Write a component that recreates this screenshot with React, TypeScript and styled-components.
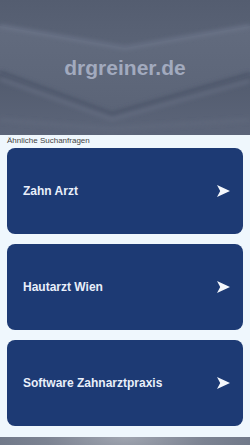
import styled, { createGlobalStyle } from 'styled-components';

const searches = ['Zahn Arzt', 'Hautarzt Wien', 'Software Zahnarztpraxis'];

export default function App() {
  return (
    <>
      <GlobalStyle />
      <StyledPage>
        <StyledHeader>
          <HeaderArt />
          <StyledTitle>drgreiner.de</StyledTitle>
        </StyledHeader>
        <StyledMain>
          <StyledLabel>Ähnliche Suchanfragen</StyledLabel>
          <StyledList>
            {searches.map((term) => (
              <StyledCard key={term} href='#'>
                <StyledCardText>{term}</StyledCardText>
                <ArrowIcon />
              </StyledCard>
            ))}
          </StyledList>
        </StyledMain>
        <StyledFooter />
      </StyledPage>
    </>
  );
}

function HeaderArt() {
  return (
    <StyledArt viewBox='0 0 250 135' preserveAspectRatio='none'>
      <defs>
        <linearGradient id='topBand' x1='0' y1='0' x2='0' y2='1'>
          <stop offset='0' stopColor='#545d70' />
          <stop offset='1' stopColor='#5a6376' />
        </linearGradient>
        <linearGradient id='midBand' x1='0' y1='0' x2='0' y2='1'>
          <stop offset='0' stopColor='#626b7e' />
          <stop offset='1' stopColor='#5b6477' />
        </linearGradient>
        <linearGradient id='lowBand' x1='0' y1='0' x2='0' y2='1'>
          <stop offset='0' stopColor='#525b6e' />
          <stop offset='1' stopColor='#5c6579' />
        </linearGradient>
        <filter id='soft'>
          <feGaussianBlur stdDeviation='2' />
        </filter>
      </defs>
      <rect width='250' height='135' fill='#596276' />
      <polygon points='0,0 250,0 250,24 125,46 0,24' fill='url(#topBand)' />
      <polygon points='0,26 125,48 250,26 250,72 112,112 0,70' fill='url(#midBand)' />
      <polygon points='0,74 112,116 250,76 250,135 0,135' fill='url(#lowBand)' />
      <g filter='url(#soft)' fill='none'>
        <polyline points='0,26 125,48 250,26' stroke='#6d768a' strokeWidth='3' />
        <polyline points='0,72 112,114 250,74' stroke='#4d566a' strokeWidth='4' />
        <polyline points='0,79 112,119 250,81' stroke='#677084' strokeWidth='2.5' />
        <polyline points='0,120 110,129 250,120' stroke='#60697d' strokeWidth='3' />
      </g>
    </StyledArt>
  );
}

function ArrowIcon() {
  return (
    <StyledArrow viewBox='0 0 13 12' aria-hidden='true'>
      <polygon points='0,0 13,6 0,12 3.2,6' fill='#f4f7fc' />
    </StyledArrow>
  );
}

const GlobalStyle = createGlobalStyle`
  html, body {
    margin: 0;
    padding: 0;
    background: #eff7fd;
    font-family: "Liberation Sans", Arial, sans-serif;
  }
`;

const StyledPage = styled.div`
  display: flex;
  flex-direction: column;
  width: 250px;
`;

const StyledHeader = styled.header`
  position: relative;
  height: 135px;
  display: flex;
  align-items: center;
  justify-content: center;
  overflow: hidden;
  background: #596276;
`;

const StyledArt = styled.svg`
  position: absolute;
  inset: 0;
  width: 100%;
  height: 100%;
`;

const StyledTitle = styled.h1`
  position: relative;
  margin: 0;
  font-size: 21px;
  font-weight: 700;
  color: #a2aabe;
`;

const StyledMain = styled.main`
  display: flex;
  flex-direction: column;
  padding: 0 7px 11px;
`;

const StyledLabel = styled.div`
  height: 13px;
  font-size: 8px;
  line-height: 11px;
  color: #444;
`;

const StyledList = styled.div`
  display: flex;
  flex-direction: column;
  gap: 10px;
`;

const StyledCard = styled.a`
  height: 86px;
  display: flex;
  align-items: center;
  justify-content: space-between;
  padding: 0 13px 0 16px;
  border-radius: 8px;
  background: #1d3a74;
  text-decoration: none;
`;

const StyledCardText = styled.span`
  font-size: 12px;
  font-weight: 700;
  color: #e9effa;
`;

const StyledArrow = styled.svg`
  width: 13px;
  height: 12px;
`;

const StyledFooter = styled.footer`
  height: 40px;
  background: radial-gradient(ellipse at 50% 0%, #a0a5b0 0%, #7c8392 45%, #667081 100%);
`;
